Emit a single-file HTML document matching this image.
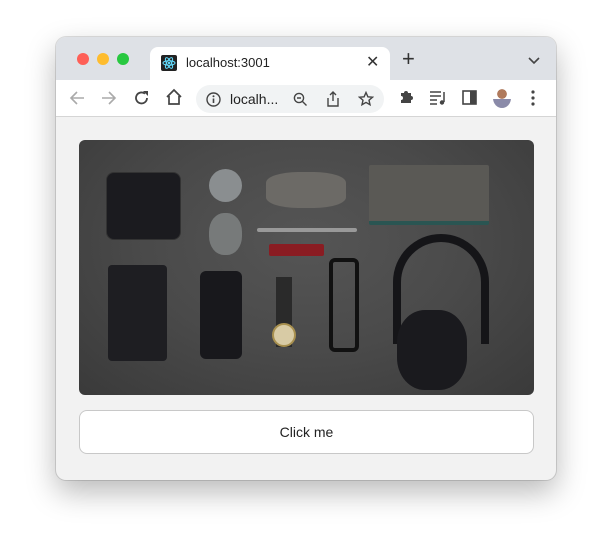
<!DOCTYPE html>
<html><head><style>
*{margin:0;padding:0;box-sizing:border-box}
body{width:612px;height:554px;background:#fff;position:relative;overflow:hidden;font-family:"Liberation Sans",sans-serif}
.win{position:absolute;left:56px;top:37px;width:500px;height:443px;border-radius:10px;background:#f2f2f2;box-shadow:0 12px 30px rgba(0,0,0,.28),0 0 0 1px rgba(0,0,0,.12);overflow:hidden}
.tabs{position:absolute;left:0;top:0;width:500px;height:43px;background:#dee1e6}
.tab{position:absolute;left:94px;top:10px;width:240px;height:34px;background:#fff;border-radius:8px 8px 0 0}
.dot{position:absolute;top:16px;width:12px;height:12px;border-radius:50%}
.tb{position:absolute;left:0;top:43px;width:500px;height:37px;background:#fff;border-bottom:1px solid #d5d5d5}
.url{position:absolute;left:140px;top:5px;width:188px;height:28px;border-radius:14px;background:#f1f3f4}
.o{position:absolute}
.img{position:absolute;left:23px;top:103px;width:455px;height:255px;border-radius:6px;overflow:hidden;background:radial-gradient(ellipse at 50% 40%,#555 0%,#4a4a4a 50%,#3a3a3a 100%)}
.btn{position:absolute;left:23px;top:373px;width:455px;height:44px;border:1px solid #c8c8c8;border-radius:8px;background:#fff;text-align:center;line-height:42px;font-size:14px;color:#222}
</style></head><body>
<div class="win">
 <div class="tabs">
  <div class="dot" style="left:21px;background:#fe5f57"></div>
  <div class="dot" style="left:41px;background:#febc2e"></div>
  <div class="dot" style="left:61px;background:#28c840"></div>
  <div class="tab">
   <div class="o" style="left:11px;top:8px;width:16px;height:16px;background:#222;border-radius:2px"><svg width="16" height="16"><g fill="none" stroke="#61dafb" stroke-width="1"><ellipse cx="8" cy="8" rx="6" ry="2.3"/><ellipse cx="8" cy="8" rx="6" ry="2.3" transform="rotate(60 8 8)"/><ellipse cx="8" cy="8" rx="6" ry="2.3" transform="rotate(-60 8 8)"/></g><circle cx="8" cy="8" r="1.2" fill="#61dafb"/></svg></div>
   <div class="o" style="left:36px;top:8px;font-size:13px;color:#222">localhost:3001</div>
   <div class="o" style="left:216px;top:5px;font-size:16px;color:#333">✕</div>
  </div>
  <div class="o" style="left:346px;top:12px;font-size:22px;color:#333;line-height:20px">+</div>
  <svg class="o" style="left:472px;top:20px" width="12" height="8"><path d="M1 1l5 5 5-5" fill="none" stroke="#444" stroke-width="1.6"/></svg>
 </div>
 <div class="tb">
  <svg class="o" style="left:12px;top:10px" width="18" height="16"><path d="M16 8H3M9 2L3 8l6 6" fill="none" stroke="#aaa" stroke-width="1.6"/></svg>
  <svg class="o" style="left:44px;top:10px" width="18" height="16"><path d="M2 8h13M9 2l6 6-6 6" fill="none" stroke="#aaa" stroke-width="1.6"/></svg>
  <svg class="o" style="left:77px;top:9px" width="18" height="18"><path d="M14 9a5.5 5.5 0 1 1-2-4.3" fill="none" stroke="#444" stroke-width="1.8"/><path d="M10 2h5v5z" fill="#444"/></svg>
  <svg class="o" style="left:109px;top:8px" width="18" height="18"><path d="M2 9L9 2l7 7M4 8v8h10V8" fill="none" stroke="#444" stroke-width="1.7"/></svg>
  <div class="url">
   <svg class="o" style="left:10px;top:7px" width="15" height="15"><circle cx="7.5" cy="7.5" r="6.5" fill="none" stroke="#444" stroke-width="1.4"/><path d="M7.5 6.5v4.5" stroke="#444" stroke-width="1.6"/><circle cx="7.5" cy="4.3" r="1" fill="#444"/></svg>
   <div class="o" style="left:34px;top:6px;font-size:14px;color:#222">localh...</div>
   <svg class="o" style="left:97px;top:7px" width="15" height="15"><circle cx="6" cy="6" r="4.6" fill="none" stroke="#444" stroke-width="1.4"/><path d="M9.5 9.5l4 4M4 6h4" stroke="#444" stroke-width="1.4"/></svg>
   <svg class="o" style="left:130px;top:6px" width="14" height="16"><path d="M2 7v8h10V7M7 10V1M4 4l3-3 3 3" fill="none" stroke="#444" stroke-width="1.4"/></svg>
   <svg class="o" style="left:162px;top:6px" width="16" height="16"><path d="M8 1.5l1.9 4.3 4.6.4-3.5 3 1 4.5L8 11.4 4 13.7l1-4.5-3.5-3 4.6-.4z" fill="none" stroke="#444" stroke-width="1.4"/></svg>
  </div>
  <svg class="o" style="left:342px;top:9px" width="16" height="16"><path d="M3 4h3a2 2 0 1 1 4 0h3v3a2 2 0 1 1 0 4v3H3v-3a2 2 0 1 0 0-4z" fill="#444"/></svg>
  <svg class="o" style="left:373px;top:10px" width="18" height="16"><path d="M1 2h11M1 6h11M1 10h7M1 14h7M15 2v10" stroke="#444" stroke-width="1.5"/><circle cx="13" cy="12.5" r="2.2" fill="#444"/></svg>
  <svg class="o" style="left:406px;top:10px" width="15" height="15"><rect x="1" y="1" width="13" height="13" fill="none" stroke="#444" stroke-width="1.6"/><rect x="8" y="1" width="6" height="13" fill="#444"/></svg>
  <div class="o" style="left:437px;top:8px;width:18px;height:20px;border-radius:50%;background:radial-gradient(circle at 50% 30%,#b07a5c 0 28%,transparent 30%),linear-gradient(#fff 0 55%,#8a8aa8 56%)"></div>
  <svg class="o" style="left:475px;top:10px" width="4" height="16"><circle cx="2" cy="2" r="1.6" fill="#444"/><circle cx="2" cy="8" r="1.6" fill="#444"/><circle cx="2" cy="14" r="1.6" fill="#444"/></svg>
 </div>
 <div class="img">
  <div class="o" style="left:27px;top:32px;width:75px;height:68px;background:#1b1b1f;border-radius:8px;border:1px solid #333"></div>
  <div class="o" style="left:130px;top:29px;width:33px;height:33px;border-radius:50%;background:#8a8e90"></div>
  <div class="o" style="left:130px;top:73px;width:33px;height:42px;border-radius:45%;background:#777a7a"></div>
  <div class="o" style="left:187px;top:32px;width:80px;height:36px;background:#6c6a66;border-radius:40% 40% 40% 40%/30%"></div>
  <div class="o" style="left:290px;top:25px;width:120px;height:60px;background:#5a5955;border-bottom:4px solid #2a5552;border-radius:2px"></div>
  <div class="o" style="left:178px;top:88px;width:100px;height:4px;background:#999;border-radius:2px"></div>
  <div class="o" style="left:190px;top:104px;width:55px;height:12px;background:#8a1c22;border-radius:2px"></div>
  <div class="o" style="left:29px;top:125px;width:59px;height:96px;background:#1e1e22;border-radius:4px"></div>
  <div class="o" style="left:121px;top:131px;width:42px;height:88px;background:#18181c;border-radius:6px"></div>
  <div class="o" style="left:197px;top:137px;width:16px;height:70px;background:#2a2a2a"></div>
  <div class="o" style="left:193px;top:183px;width:24px;height:24px;border-radius:50%;background:#d8cba5;border:2px solid #a8904f"></div>
  <div class="o" style="left:250px;top:118px;width:30px;height:94px;border:4px solid #111;border-radius:6px"></div>
  <div class="o" style="left:314px;top:94px;width:96px;height:110px;border:8px solid #151518;border-bottom:none;border-radius:48px 48px 0 0"></div>
  <div class="o" style="left:318px;top:170px;width:70px;height:80px;background:#1a1a1e;border-radius:40%"></div>
 </div>
 <div class="btn">Click me</div>
</div>
</body></html>
